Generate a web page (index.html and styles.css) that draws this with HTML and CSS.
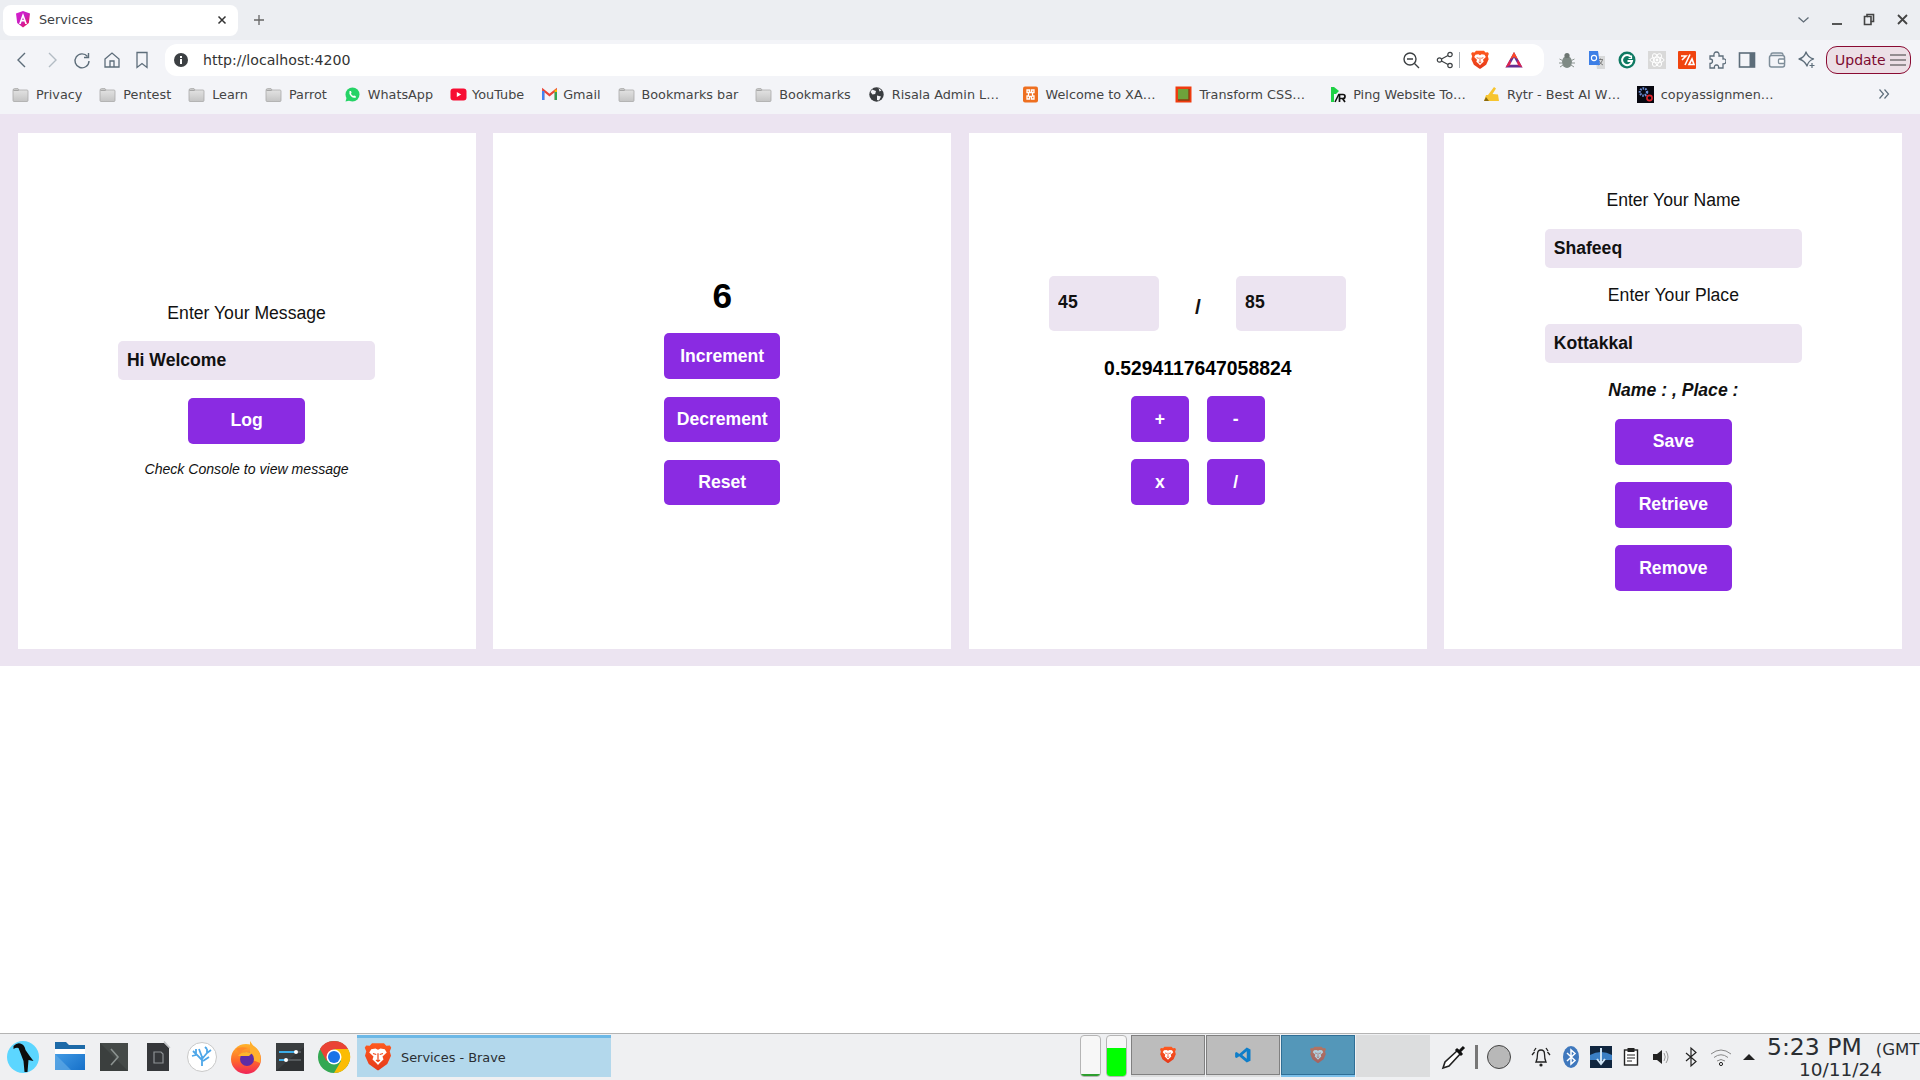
FILE: index.html
```html
<!DOCTYPE html>
<html lang="en">
<head>
<meta charset="utf-8">
<title>Services</title>
<link rel="stylesheet" href="styles.css">
</head>
<body>
<svg class="defs" width="0" height="0" aria-hidden="true">
  <defs>
    <linearGradient id="fold" x1="0" y1="0" x2="0" y2="1"><stop offset="0" stop-color="#e6e6e6"/><stop offset="1" stop-color="#c4c4c4"/></linearGradient>
    <linearGradient id="ang" x1="0" y1="0" x2="1" y2="1"><stop offset="0" stop-color="#d91ed0"/><stop offset="0.5" stop-color="#c81fc0"/><stop offset="1" stop-color="#f5103a"/></linearGradient>
    <linearGradient id="br" x1="0" y1="0" x2="0" y2="1"><stop offset="0" stop-color="#ff5a1f"/><stop offset="1" stop-color="#e5391a"/></linearGradient>
    <linearGradient id="blu" x1="0" y1="0" x2="1" y2="1"><stop offset="0" stop-color="#4aa3ea"/><stop offset="1" stop-color="#1670c9"/></linearGradient>
    <linearGradient id="ff" x1="0" y1="0" x2="0" y2="1"><stop offset="0" stop-color="#ffb52b"/><stop offset="0.55" stop-color="#ff6a2a"/><stop offset="1" stop-color="#f0235a"/></linearGradient>
    <symbol id="folder" viewBox="0 0 17 17">
      <path d="M1 4.5 Q1 2.5 2.5 2.5 H6 L7 4 H15 Q16 4 16 5 V14.5 Q16 15.5 15 15.5 H2 Q1 15.5 1 14.5 Z" fill="url(#fold)" stroke="#a9a9a9" stroke-width="0.8"/>
      <path d="M1.4 4.2 H6.8" stroke="#8c8c8c" stroke-width="1"/>
    </symbol>
    <symbol id="brave" viewBox="0 0 24 24">
      <path d="M7.2 1 H16.8 L18.6 3 L21.5 2.8 L22.6 4.6 L21.4 7.4 L22.4 11 L19.4 17.6 L13 22.2 Q12 23 11 22.2 L4.6 17.6 L1.6 11 L2.6 7.4 L1.4 4.6 L2.5 2.8 L5.4 3 Z" fill="url(#br)"/>
      <path d="M6.6 5.8 L10 5.2 L12 6.2 L14 5.2 L17.4 5.8 L19 8.4 L15.6 11.6 L16.4 14 L13.6 16.6 L12 18.4 L10.4 16.6 L7.6 14 L8.4 11.6 L5 8.4 Z" fill="#fff"/>
      <path d="M8 9.2 L10.6 10 M16 9.2 L13.4 10 M10.4 14.4 L12 15.6 L13.6 14.4 M12 9 V15" stroke="#ee4a1e" stroke-width="1" fill="none"/>
    </symbol>
  </defs>
</svg>

<header class="tabstrip">
  <div class="tab">
    <svg class="ic16" viewBox="0 0 16 17"><path d="M8 0 L15 2.6 L13.8 12 L8 16.5 L2.2 12 L1 2.6 Z" fill="url(#ang)"/><path d="M8 2 L12 13 H10.2 L9.4 10.6 H6.6 L5.8 13 H4 Z M7.2 8.9 H8.8 L8 6.4 Z" fill="#fff"/></svg>
    <span class="tab-title">Services</span>
    <svg class="tab-x" viewBox="0 0 10 10"><path d="M1.5 1.5 L8.5 8.5 M8.5 1.5 L1.5 8.5" stroke="#333" stroke-width="1.5"/></svg>
  </div>
  <svg class="tab-plus" viewBox="0 0 12 12"><path d="M6 1 V11 M1 6 H11" stroke="#666" stroke-width="1.3"/></svg>
  <div class="winctl">
    <svg class="wc" viewBox="0 0 33 14"><path d="M11.5 4.5 L16.5 9 L21.5 4.5" stroke="#5f6b76" stroke-width="1.3" fill="none"/></svg>
    <svg class="wc" viewBox="0 0 33 14"><path d="M12 11 H22" stroke="#444" stroke-width="1.8"/></svg>
    <svg class="wc" viewBox="0 0 33 14"><path d="M11.5 3.5 H14 V1.5 H20.5 V8.5 H18 V11.5 H11.5 Z" fill="#eceef2" stroke="#444" stroke-width="1.6"/><path d="M14 3.5 H18 V8.500" fill="none" stroke="#444" stroke-width="1.6"/></svg>
    <svg class="wc" viewBox="0 0 33 14"><path d="M12 2 L21 11 M21 2 L12 11" stroke="#444" stroke-width="1.8"/></svg>
  </div>
</header>

<nav class="toolbar">
  <div class="navbtns">
    <svg class="nb" viewBox="0 0 30 20"><path d="M18 3 L11 10 L18 17" fill="none" stroke="#5d6d7a" stroke-width="1.4"/></svg>
    <svg class="nb" viewBox="0 0 30 20"><path d="M12 3 L19 10 L12 17" fill="none" stroke="#b3bcc4" stroke-width="1.4"/></svg>
    <svg class="nb" viewBox="0 0 30 20"><path d="M20.5 6.5 A7 7 0 1 0 22 11" fill="none" stroke="#5d6d7a" stroke-width="1.4"/><path d="M21.5 3 V7.5 H17" fill="none" stroke="#5d6d7a" stroke-width="1.4"/></svg>
    <svg class="nb" viewBox="0 0 30 20"><path d="M8 9 L15 3 L22 9 V17 H8 Z M13 17 V11 H17 V17" fill="none" stroke="#5d6d7a" stroke-width="1.3"/></svg>
    <svg class="nb" viewBox="0 0 30 20"><path d="M10 2.5 H20 V17.5 L15 13.5 L10 17.5 Z" fill="none" stroke="#5d6d7a" stroke-width="1.3"/></svg>
  </div>
  <div class="urlbar">
    <svg class="ic14" viewBox="0 0 14 14"><circle cx="7" cy="7" r="7" fill="#3c4043"/><rect x="6" y="6" width="2" height="5" fill="#fff"/><rect x="6" y="3" width="2" height="2" fill="#fff"/></svg>
    <span class="url">http://localhost:4200</span>
    <div class="url-right">
      <svg class="ub ub-zoom" viewBox="0 0 18 18"><circle cx="8" cy="8" r="6" fill="none" stroke="#3c4043" stroke-width="1.4"/><path d="M12.5 12.5 L17 17 M5 8 H11" stroke="#3c4043" stroke-width="1.4"/></svg>
      <svg class="ub ub-share" viewBox="0 0 18 18"><circle cx="14" cy="3.5" r="2.2" fill="none" stroke="#3c4043" stroke-width="1.2"/><circle cx="14" cy="14.5" r="2.2" fill="none" stroke="#3c4043" stroke-width="1.2"/><circle cx="3.5" cy="9" r="2.2" fill="none" stroke="#3c4043" stroke-width="1.2"/><path d="M5.5 8 L12 4.5 M5.5 10 L12 13.5" stroke="#3c4043" stroke-width="1.2"/></svg>
      <span class="ub-sep"></span>
      <svg class="ub ub-brave"><use href="#brave"/></svg>
      <svg class="ub ub-bat" viewBox="0 0 18 18"><path d="M9 1 L17.5 16.5 H0.5 Z" fill="#662d91"/><path d="M9 1 L13 8.5 L9 6 L5 8.5 Z" fill="#ff4724"/><path d="M0.5 16.5 L5 8.5 L6.5 13.5 Z M17.5 16.5 L13 8.5 L11.5 13.5 Z" fill="#e0244e"/><path d="M9 6.5 L13 13.7 H5 Z" fill="#fff"/></svg>
    </div>
  </div>
  <div class="exts">
    <svg class="ex" viewBox="0 0 18 18"><ellipse cx="9" cy="11" rx="5" ry="6" fill="#7f8a85"/><circle cx="9" cy="4.5" r="2.6" fill="#6d7672"/><path d="M1.5 8 L4.5 9.5 M1 12 H4 M2 16 L5 14 M16.5 8 L13.5 9.5 M17 12 H14 M16 16 L13 14" stroke="#8b9490" stroke-width="1"/></svg>
    <svg class="ex" viewBox="0 0 18 18"><path d="M7 5 H17 V18 H9 Z" fill="#d8d9da"/><path d="M10.5 8.5 H15 M12.5 7.5 V9 M14.5 9 Q13 13 10.5 14 M11 10 Q12.5 13 15 14" stroke="#777" stroke-width="0.9" fill="none"/><path d="M1 0 H10 L12 14 H1 Z" fill="#3d7fe6"/><circle cx="6" cy="7" r="2.6" fill="none" stroke="#fff" stroke-width="1.1"/></svg>
    <svg class="ex" viewBox="0 0 18 18"><circle cx="9" cy="9" r="8.5" fill="#0f7a63"/><path d="M13 6 A5 5 0 1 0 14 10 H9.5" fill="none" stroke="#fff" stroke-width="2"/><path d="M13.5 4.5 V7.5 H10.5" fill="none" stroke="#fff" stroke-width="1.2"/></svg>
    <svg class="ex" viewBox="0 0 18 18"><rect width="18" height="18" fill="#d9d9d9"/><g fill="none" stroke="#fff" stroke-width="1"><ellipse cx="9" cy="9" rx="7" ry="2.8"/><ellipse cx="9" cy="9" rx="7" ry="2.8" transform="rotate(60 9 9)"/><ellipse cx="9" cy="9" rx="7" ry="2.8" transform="rotate(120 9 9)"/></g><circle cx="9" cy="9" r="1.4" fill="#fff"/></svg>
    <svg class="ex" viewBox="0 0 18 18"><rect width="18" height="18" rx="1" fill="#f0440f"/><path d="M3 5 H8 L4 9 M12 3.5 L7 14 M11 13.5 L14 8 L16 13.5 Z" fill="none" stroke="#fff" stroke-width="1.6"/></svg>
    <svg class="ex" viewBox="0 0 18 18"><path d="M2 5 H6 Q5.5 1 8.5 1 Q11.5 1 11 5 H15 V8 Q18 7.5 18 10.5 Q18 13 15 13 V17 H10.5 Q11 14 8.5 14 Q6 14 6.5 17 H2 V12.5 Q4.5 12.5 4.5 10 Q4.5 8 2 8 Z" fill="none" stroke="#5d6d7a" stroke-width="1.3"/></svg>
    <svg class="ex" viewBox="0 0 18 18"><rect x="1.5" y="2" width="15" height="14" fill="none" stroke="#5d6d7a" stroke-width="1.6"/><rect x="11.5" y="2" width="5" height="14" fill="#5d6d7a"/></svg>
    <svg class="ex" viewBox="0 0 18 18"><path d="M3 5 V3.5 Q3 2 5 2 H13 Q15 2 15 3.5 V5" fill="none" stroke="#7e8d99" stroke-width="1.3"/><rect x="1.5" y="4.5" width="15" height="11.5" rx="2" fill="none" stroke="#7e8d99" stroke-width="1.5"/><rect x="10.5" y="8" width="6" height="4.5" rx="1" fill="#fff" stroke="#7e8d99" stroke-width="1.3"/></svg>
    <svg class="ex" viewBox="0 0 18 18"><path d="M8 1 Q10 6.5 15.5 8 Q10.5 9.5 9 15 Q6.5 9.5 1 8 Q6.5 6.5 8 1 Z" fill="none" stroke="#5d6d7a" stroke-width="1.3" stroke-linejoin="round"/><path d="M14 12 V17 M11.5 14.5 H16.5" stroke="#5d6d7a" stroke-width="1.2"/></svg>
  </div>
  <div class="update"><span>Update</span>
    <svg class="burger" viewBox="0 0 16 12"><path d="M0 1 H16 M0 6 H16 M0 11 H16" stroke="#3c3c3c" stroke-width="1.2"/></svg>
  </div>
</nav>

<div class="bookmarks">
  <a class="bm"><svg class="bi"><use href="#folder"/></svg>Privacy</a>
  <a class="bm"><svg class="bi"><use href="#folder"/></svg>Pentest</a>
  <a class="bm"><svg class="bi"><use href="#folder"/></svg>Learn</a>
  <a class="bm"><svg class="bi"><use href="#folder"/></svg>Parrot</a>
  <a class="bm"><svg class="bi" viewBox="0 0 17 17"><circle cx="8.5" cy="8.5" r="7" fill="#25d366"/><path d="M1.5 15.5 L2.8 11 L6 14.4 Z" fill="#25d366"/><path d="M5.5 5 Q4.6 8 7 10.2 Q9.4 12.4 12 11.4 L11.6 10 L10 9.4 L9.2 10 Q7.5 9.2 6.9 7.6 L7.6 6.9 L7 5 Z" fill="#fff"/></svg>WhatsApp</a>
  <a class="bm bm-tight"><svg class="bi" viewBox="0 0 17 17"><rect x="0.5" y="2.5" width="16" height="12" rx="3" fill="#f70d33"/><path d="M6.8 6 L11.2 8.5 L6.8 11 Z" fill="#fff"/></svg>YouTube</a>
  <a class="bm bm-tight"><svg class="bi" viewBox="0 0 17 17"><path d="M2.2 14 V4 L8.5 9 L14.8 4 V14" fill="none" stroke="#ea4335" stroke-width="2.2"/><path d="M2.2 14 V5" stroke="#4285f4" stroke-width="2.4"/><path d="M14.8 14 V5" stroke="#34a853" stroke-width="2.4"/><path d="M14.8 3.6 V6" stroke="#fbbc04" stroke-width="2.4"/></svg>Gmail</a>
  <a class="bm"><svg class="bi"><use href="#folder"/></svg>Bookmarks bar</a>
  <a class="bm"><svg class="bi"><use href="#folder"/></svg>Bookmarks</a>
  <a class="bm bm-fixed"><svg class="bi" viewBox="0 0 17 17"><circle cx="8.5" cy="8.5" r="7.2" fill="#3a3d40"/><path d="M4 3.5 L8 5 L7.2 8 L4.5 8.5 L2.5 6 Z M9 9.5 L13 10.5 L11 14.5 L9 14 Z M10.5 2 L13.5 4.5 L11.5 5.5 Z" fill="#f3f4f8"/></svg>Risala Admin L…</a>
  <a class="bm bm-fixed"><svg class="bi" viewBox="0 0 17 17"><rect x="1" y="0.5" width="15" height="16" rx="2" fill="#ee6f20"/><path d="M5 4 H7.5 V6.5 H9.5 V4 H12 V6.5 H10.5 V10 H12 V13 H9.5 V10.5 H7.5 V13 H5 V10 H6.5 V6.5 H5 Z" fill="none" stroke="#fff" stroke-width="1.3"/></svg>Welcome to XA…</a>
  <a class="bm bm-fixed"><svg class="bi" viewBox="0 0 17 17"><rect x="0.5" y="0.5" width="16" height="16" fill="#ef3b0e"/><rect x="3" y="3" width="11" height="11" fill="#6ea33b"/><path d="M14 3 V14 H3" fill="none" stroke="#8c3f12" stroke-width="1.4"/></svg>Transform CSS…</a>
  <a class="bm bm-fixed"><svg class="bi" viewBox="0 0 17 17"><path d="M2 1 H5 L10 5 L7 8 L5 8 V16 H2 Z" fill="#1fd145"/><path d="M6 16 L10 8" stroke="#111" stroke-width="1.6"/><path d="M10.5 16 V8.5 H14 Q16 8.5 16 10.5 Q16 12.5 14 12.5 H11 M13.5 12.5 L16 16" fill="none" stroke="#111" stroke-width="1.7"/></svg>Ping Website To…</a>
  <a class="bm bm-fixed"><svg class="bi" viewBox="0 0 17 17"><path d="M1 15 L3 9 L5 9 L11 1 L13 2.5 L9.5 8 L15 8.5 L16 15 Z" fill="#f7c530"/><path d="M1 15 L3 11 L6 15 Z" fill="#8a6a10"/></svg>Rytr - Best AI W…</a>
  <a class="bm bm-fixed"><svg class="bi" viewBox="0 0 17 17"><rect width="17" height="17" fill="#070710"/><circle cx="6.5" cy="6" r="3.6" fill="none" stroke="#6d8fd8" stroke-width="2.4" stroke-dasharray="1.6 1"/><circle cx="12.5" cy="12" r="2.6" fill="none" stroke="#e0242c" stroke-width="1.6"/></svg>copyassignmen…</a>
  <svg class="more" viewBox="0 0 12 12"><path d="M1.5 1.5 L5.5 6 L1.5 10.5 M6.5 1.5 L10.5 6 L6.5 10.5" fill="none" stroke="#5d6d7a" stroke-width="1.2"/></svg>
</div>

<main class="app">
  <section class="card">
    <label class="lbl">Enter Your Message</label>
    <input class="field" type="text" value="Hi Welcome">
    <button class="btn">Log</button>
    <p class="hint">Check Console to view message</p>
  </section>
  <section class="card">
    <h1 class="count">6</h1>
    <button class="btn">Increment</button>
    <button class="btn">Decrement</button>
    <button class="btn">Reset</button>
  </section>
  <section class="card">
    <div class="calc-row">
      <input class="num" type="text" value="45">
      <span class="op">/</span>
      <input class="num" type="text" value="85">
    </div>
    <p class="result">0.5294117647058824</p>
    <div class="ops">
      <button class="btn btn-op">+</button>
      <button class="btn btn-op">-</button>
      <button class="btn btn-op">x</button>
      <button class="btn btn-op">/</button>
    </div>
  </section>
  <section class="card">
    <label class="lbl">Enter Your Name</label>
    <input class="field" type="text" value="Shafeeq">
    <label class="lbl">Enter Your Place</label>
    <input class="field" type="text" value="Kottakkal">
    <p class="summary">Name : , Place :</p>
    <button class="btn">Save</button>
    <button class="btn">Retrieve</button>
    <button class="btn">Remove</button>
  </section>
</main>

<div class="blank"></div>

<footer class="taskbar">
  <div class="launch">
    <svg class="tk tk-first" viewBox="0 0 44 44"><ellipse cx="22" cy="22" rx="16" ry="16" fill="#5cd6ff"/><path d="M12.500 11 Q16.500 7 20.500 9 Q23.500 10 24.500 15 Q28.500 21 32.500 26 L27.500 25 L26.500 37 L23.500 37 L22.500 26 Q19.500 18 17.500 13 Q15.500 12 12.500 14 Z" fill="#0d0d0d"/></svg>
    <svg class="tk" viewBox="0 0 44 44"><rect x="7" y="10" width="30" height="25" fill="url(#blu)"/><path d="M7 7 H18 L21 10 H37 V16 H7 Z" fill="#1d6aa8"/><rect x="7" y="14" width="30" height="5" fill="#fff"/><path d="M7 19 L23 35 H7 Z" fill="#5fa9e6" opacity=".7"/></svg>
    <svg class="tk" viewBox="0 0 44 44"><rect x="8" y="8" width="28" height="28" fill="#3b3f3e"/><path d="M8 8 H36 V36 Z" fill="#454a48"/><path d="M19 14 L26 22 L19 30" fill="none" stroke="#8b9290" stroke-width="1.6"/></svg>
    <svg class="tk" viewBox="0 0 44 44"><path d="M11 8 H28 L33 13 V36 H11 Z" fill="#35373a"/><path d="M28 6.500 L34 13" stroke="#bfc2c5" stroke-width="1.2"/><path d="M18 17 H25 L27 19 V28 H18 Z" fill="none" stroke="#8d9194" stroke-width="1.2"/></svg>
    <svg class="tk" viewBox="0 0 44 44"><circle cx="22" cy="22" r="14.500" fill="#fff" stroke="#c9c9c9"/><path d="M22 31 V21 M22 25 L16 19 V14 M16 19 L13 16 M22 22 L19 14 M22 24 L27 18 V14 M27 18 L31 15 M23 26 L29 22 M16 20 L12 21 M27 14 L25 12" fill="none" stroke="#4da6e8" stroke-width="1.800"/></svg>
    <svg class="tk" viewBox="0 0 44 44"><circle cx="22" cy="24" r="15" fill="url(#ff)"/><path d="M26 6 Q28 10 33 14 Q38 20 36 28 L26 24 Z" fill="#ffb02e"/><path d="M12 14 Q16 11 24 13 Q17 15 16 19 Z" fill="#ff8a2a"/><circle cx="23" cy="24" r="7" fill="#5e2ca5"/><path d="M14 21 Q19 15 28 18 L25 21 H17 Z" fill="#ffb52b"/></svg>
    <svg class="tk" viewBox="0 0 44 44"><rect x="8" y="8" width="28" height="28" fill="#2f3234"/><path d="M8 8 H36 V12 L8 36 Z" fill="#3a3e40"/><path d="M11 17 H33 M11 25 H33" stroke="#555a5d" stroke-width="2"/><path d="M11 17 H28 M11 25 H18" stroke="#3daee9" stroke-width="2"/><circle cx="28" cy="17" r="2" fill="#fff"/><circle cx="18" cy="25" r="2" fill="#fff"/></svg>
    <svg class="tk" viewBox="0 0 44 44"><circle cx="22" cy="22" r="16" fill="#34a853"/><path d="M22 6 A16 16 0 0 1 36 14 H22 Z M8 14 A16 16 0 0 1 22 6 V14 L14.500 26 Z M8 14 L14.500 26" fill="#ea4335"/><path d="M36 14 A16 16 0 0 1 22 38 L29 26 Q30 19 22 14 Z" fill="#fbbc04"/><circle cx="22" cy="22" r="7.500" fill="#fff"/><circle cx="22" cy="22" r="6" fill="#1a73e8"/></svg>
  </div>
  <div class="taskbtn">
    <svg class="tb-ic"><use href="#brave"/></svg>
    <span>Services - Brave</span>
  </div>
  <div class="pager">
    <div class="meter"><span class="fill fill-low"></span></div>
    <div class="meter meter-last"><span class="fill fill-high"></span></div>
    <div class="desk"><svg class="dk-ic"><use href="#brave"/></svg></div>
    <div class="desk"><svg class="dk-ic" viewBox="0 0 24 24"><path d="M17 2 L22 4.500 V19.500 L17 22 L7 13.500 L3.500 16 L1.500 15 V9 L3.500 8 L7 10.500 Z M17 7 L11 12 L17 17 Z" fill="#0f7ec9" fill-rule="evenodd"/></svg></div>
    <div class="desk desk-on"><svg class="dk-ic dk-dim"><use href="#brave"/></svg></div>
    <div class="desk desk-empty"></div>
  </div>
  <div class="tray">
    <svg class="pen" viewBox="0 0 26 26"><path d="M2 24 L4 18 L17 6 L20 9 L8 22 Z" fill="#fff" stroke="#222" stroke-width="1.6"/><path d="M15 5 L21 11 M18 8 L23 3" stroke="#111" stroke-width="3"/></svg>
    <span class="tray-sep"></span>
    <span class="dot"></span>
    <svg class="tr" viewBox="0 0 20 24"><path d="M5 17 Q6.500 14 6.500 9 Q6.500 5 10 5 Q13.500 5 13.500 9 Q13.500 14 15 17 Z M3 6 L5 3 M17 6 L15 3 M1 10 L3.500 7 M19 10 L16.500 7" fill="none" stroke="#222" stroke-width="1.300"/><circle cx="10" cy="20" r="1.600" fill="#222"/></svg>
    <svg class="tr" viewBox="0 0 20 24"><ellipse cx="10" cy="12" rx="8" ry="11" fill="#3f78bd"/><path d="M6 8 L14 15.500 L10 19 V5 L14 8.500 L6 16" fill="none" stroke="#fff" stroke-width="1.500"/></svg>
    <svg class="tr tr-box" viewBox="0 0 22 22"><rect width="22" height="22" fill="#10263f"/><path d="M0 9 Q11 3 22 9 V14 H0 Z" fill="#3b7fc4"/><path d="M11 2 V17 M7 13 L11 18 L15 13" fill="none" stroke="#cfe4f5" stroke-width="2"/></svg>
    <svg class="tr" viewBox="0 0 20 24"><rect x="3.500" y="5" width="13" height="15" fill="#fff" stroke="#222" stroke-width="1.400"/><rect x="6.500" y="3" width="7" height="4" fill="#222"/><path d="M6 10 H14 M6 13 H14 M6 16 H11" stroke="#222"/></svg>
    <svg class="tr" viewBox="0 0 20 24"><path d="M2 9 H6 L11 5 V19 L6 15 H2 Z" fill="#222"/><path d="M13 8 Q15.500 12 13 16 M15 6 Q19 12 15 18" fill="none" stroke="#999" stroke-width="1"/></svg>
    <svg class="tr" viewBox="0 0 20 24"><path d="M5 8 L15 16.500 L10 21 V3 L15 7.500 L5 16" fill="none" stroke="#222" stroke-width="1.200"/></svg>
    <svg class="tr" viewBox="0 0 24 24"><path d="M2 9 Q12 1 22 9 M5 12.500 Q12 7 19 12.500 M8 16 Q12 13 16 16" fill="none" stroke="#888" stroke-width="1"/><circle cx="12" cy="19" r="1.600" fill="none" stroke="#222"/></svg>
    <svg class="tray-up" viewBox="0 0 12 8"><path d="M6 1 L12 7 H0 Z" fill="#222"/></svg>
  </div>
  <div class="clock">
    <div class="clock-time">5:23 PM<span class="clock-tz">(GMT</span></div>
    <div class="clock-date">10/11/24</div>
  </div>
</footer>
</body>
</html>
```

FILE: styles.css
```css
* { box-sizing: border-box; }
html, body { margin: 0; height: 100%; }
body {
  display: flex;
  flex-direction: column;
  height: 100vh;
  overflow: hidden;
  background: #fff;
  font-family: "DejaVu Sans", sans-serif;
  color: #111;
}
.defs { position: absolute; }

/* browser tabs */
.tabstrip {
  flex: 0 0 40px;
  display: flex;
  align-items: flex-start;
  background: #eceef2;
  padding: 5px 0 0 3px;
}
.tab {
  width: 235px;
  height: 31px;
  background: #fff;
  border-radius: 8px;
  display: flex;
  align-items: center;
  padding: 0 9px 2px 12px;
  gap: 8px;
  font-size: 12.8px;
  color: #3c4043;
}
.ic16 { width: 16px; height: 17px; flex: none; }
.tab-title { flex: 1; }
.tab-x { width: 10px; height: 10px; margin-right: 2px; }
.tab-plus { width: 12px; height: 12px; margin: 9px 0 0 15px; }
.winctl { display: flex; margin-left: auto; margin-right: 1px; padding-top: 8px; }
.wc { width: 33px; height: 14px; }

/* toolbar */
.toolbar {
  flex: 0 0 36px;
  display: flex;
  align-items: flex-start;
  background: #f3f4f8;
  padding: 4px 9px 0 7px;
}
.navbtns { display: flex; height: 32px; align-items: center; margin-right: 8px; }
.nb { width: 30px; height: 20px; }
.urlbar {
  flex: none;
  width: 1379px;
  height: 32px;
  background: #fff;
  border-radius: 12px;
  display: flex;
  align-items: center;
  padding-left: 9px;
}
.ic14 { width: 14px; height: 14px; flex: none; }
.url { margin-left: 15px; font-size: 14.15px; color: #333; }
.url-right { margin-left: auto; display: flex; align-items: center; padding-right: 21px; }
.ub { height: 18px; width: 18px; flex: none; }
.ub-zoom { margin-right: 16px; }
.ub-share { margin-right: 5.5px; }
.ub-sep { width: 1px; height: 16px; background: #a9b0b6; margin-right: 10px; }
.ub-brave { width: 20px; height: 20px; margin-right: 15px; }
.exts { display: flex; height: 32px; align-items: center; gap: 12px; margin-left: 14px; }
.ex { width: 18px; height: 18px; flex: none; }
.update {
  flex: none;
  margin-left: auto;
  width: 85px;
  height: 28px;
  border: 1px solid #8a0b33;
  border-radius: 11px;
  background: #ecdfe6;
  color: #7c0a30;
  font-size: 14px;
  display: flex;
  align-items: center;
  gap: 4px;
  padding-left: 8px;
  margin-top: 2px;
}
.burger { width: 16px; height: 12px; flex: none; }

/* bookmarks */
.bookmarks {
  flex: 0 0 38px;
  display: flex;
  align-items: center;
  gap: 17px;
  background: #f3f4f8;
  padding: 0 30px 2px 12px;
  font-size: 12.8px;
  color: #444;
}
.bm { display: inline-flex; align-items: center; gap: 7px; white-space: nowrap; }
.bm-tight { gap: 5px; }
.bm-fixed { width: 136.8px; }
.bi { width: 17px; height: 17px; flex: none; }
.more { width: 12px; height: 12px; margin-left: auto; }

/* page */
.app {
  flex: 0 0 552px;
  display: grid;
  grid-template-columns: repeat(4, 1fr);
  gap: 17.6px;
  padding: 19px 17.6px 17px;
  background: #ece4f1;
  font-family: "Liberation Sans", Arial, sans-serif;
}
.card {
  background: #fff;
  display: flex;
  flex-direction: column;
  align-items: center;
  justify-content: center;
  gap: 17.6px;
  padding-bottom: 1px;
}
.lbl { font-size: 17.6px; line-height: 21px; color: #111; }
.field, .num {
  border: 0;
  outline: 0;
  background: #ece4f1;
  border-radius: 5px;
  font: bold 17.6px "Liberation Sans", Arial, sans-serif;
  color: #111;
  padding: 0 8.8px;
}
.field { width: 257px; height: 39px; }
.num { width: 110px; height: 55px; padding-bottom: 1px; }
.btn {
  width: 116.6px;
  height: 45.6px;
  border: 0;
  border-radius: 5px;
  background: #8a2be2;
  color: #fff;
  font: bold 17.6px "Liberation Sans", Arial, sans-serif;
  padding: 0;
}
.hint { margin: 0; font-size: 14.08px; line-height: 17px; font-style: italic; color: #111; }
.count { margin: 0; font-size: 35.2px; line-height: 40px; font-weight: bold; color: #000; }
.calc-row { display: flex; align-items: center; gap: 28px; margin-bottom: 8.2px; }
.op { width: 21px; text-align: center; font-size: 21px; font-weight: bold; color: #111; padding-top: 7px; }
.result { margin: 0; font-size: 19.36px; line-height: 22px; font-weight: bold; color: #000; }
.ops { display: grid; grid-template-columns: 58px 58px; gap: 17.6px 18px; }
.btn-op { width: 58px; }
.summary { margin: 0; font-size: 17.6px; line-height: 21px; font-weight: bold; font-style: italic; color: #111; }

.blank { flex: 1; background: #fff; }

/* panel */
.taskbar {
  flex: 0 0 46px;
  display: flex;
  align-items: flex-start;
  background: #eff0f2;
  border-top: 1px solid #b4b4b4;
  padding: 1px 0 0 1px;
}
.launch { display: flex; height: 44px; margin-right: 1px; }
.tk { width: 44px; height: 44px; flex: none; }
.tk-first { margin-right: 3px; }
.taskbtn {
  width: 254px;
  height: 42px;
  background: #b3d8ec;
  border-top: 3px solid #6cb8e6;
  display: flex;
  align-items: center;
  padding: 0 0 1px 6px;
  gap: 8px;
  font-size: 12.9px;
  color: #2a2e32;
}
.tb-ic { width: 30px; height: 30px; flex: none; }
.pager { display: flex; margin-left: auto; height: 42px; gap: 1px; }
.meter {
  width: 21px;
  height: 42px;
  border: 1px solid #b5b5b5;
  border-radius: 4px;
  background: #f7f7f7;
  margin-right: 4px;
  display: flex;
  align-items: flex-end;
  overflow: hidden;
}
.meter-last { margin-right: 3px; }
.fill { display: block; width: 100%; }
.fill-low { height: 2px; background: #2e9e2e; }
.fill-high { height: 28px; background: #00ff00; }
.desk {
  width: 74px;
  height: 40px;
  background: #bcbcbc;
  border: 1px solid #808080;
  box-shadow: 0 2px 0 #dcddde;
  display: flex;
  align-items: center;
  justify-content: center;
}
.desk-on { background: #5497b9; border-color: #2f6f96; box-shadow: 0 2px 0 #7cc0ea; }
.desk-empty { background: #dcddde; border: 0; }
.dk-ic { width: 18px; height: 20px; }
.dk-dim { opacity: .55; }
.tray { display: flex; align-items: center; height: 44px; margin-left: 11px; }
.pen { width: 26px; height: 26px; margin-right: 8px; }
.tray-sep { width: 3px; height: 24px; background: #777; margin-right: 9px; }
.dot { width: 24px; height: 24px; border-radius: 50%; background: #b8b8b8; border: 1px solid #444; margin-right: 15px; }
.tr { width: 30px; height: 24px; flex: none; }
.tr-box { height: 22px; }
.tray-up { width: 12px; height: 8px; margin: 0 12px 0 7px; }
.clock { width: 153px; white-space: nowrap; color: #2a2e32; }
.clock-time { font-size: 23.5px; line-height: 24px; }
.clock-tz { font-size: 16.6px; margin-left: 14px; }
.clock-date { font-size: 18.5px; line-height: 20px; margin-left: 32px; margin-top: -2px; }
```
